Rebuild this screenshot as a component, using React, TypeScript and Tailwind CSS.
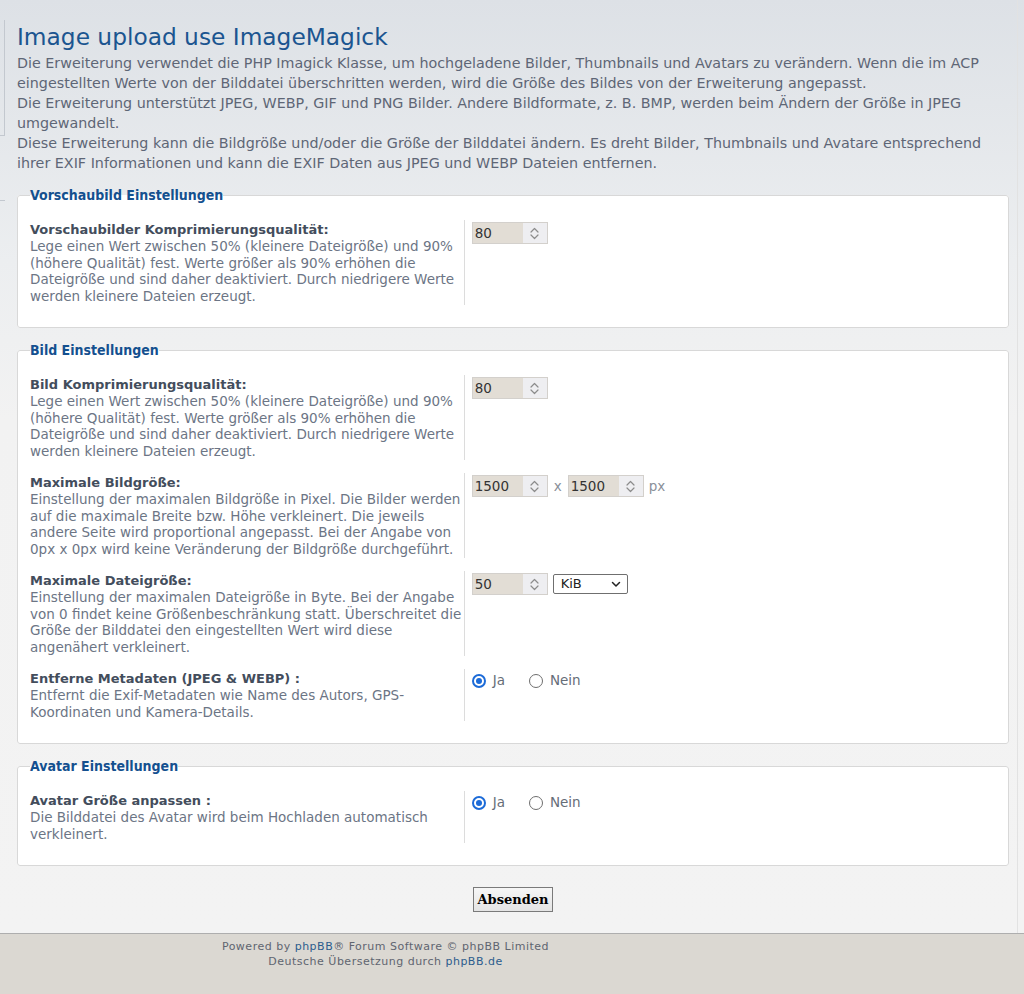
import React from "react";

const sans = "font-['DejaVu_Sans','Verdana',sans-serif]";

function Spinner() {
  return (
    <svg width="11" height="15" viewBox="0 0 11 15" fill="none" stroke="#8c8c8c" strokeWidth="1.2" strokeLinecap="round" strokeLinejoin="round">
      <path d="M2 6 L5.5 2.5 L9 6" />
      <path d="M2 9 L5.5 12.5 L9 9" />
    </svg>
  );
}

function NumberInput({ value }: { value: string }) {
  return (
    <div className="flex h-[22px] w-[76px] shrink-0 border border-[#d3d0cc]">
      <div className="flex-1 bg-[#e2ddd5] pl-[2px] text-[13.5px] leading-[20px] text-[#333333]">{value}</div>
      <div className="flex w-[24px] items-center justify-center bg-[#eeeef1]">
        <Spinner />
      </div>
    </div>
  );
}

function Radio({ checked, label }: { checked: boolean; label: string }) {
  return (
    <div className="flex items-center">
      {checked ? (
        <span className="flex h-[14px] w-[14px] items-center justify-center rounded-full border-2 border-[#1c6bd8] bg-white">
          <span className="h-[6px] w-[6px] rounded-full bg-[#1c6bd8]" />
        </span>
      ) : (
        <span className="h-[14px] w-[14px] rounded-full border border-[#6e6e6e] bg-white" />
      )}
      <span className="ml-[7px] text-[13.5px] leading-[17px] text-[#666d78]">{label}</span>
    </div>
  );
}

function Row({
  label,
  lines,
  children,
  last,
}: {
  label: string;
  lines: string[];
  children: React.ReactNode;
  last?: boolean;
}) {
  return (
    <div className={"flex " + (last ? "" : "mb-[13px]")}>
      <div className="w-[45%] shrink-0 border-r border-[#dcdcdc] py-[1px] pr-[5px]">
        <div className="whitespace-nowrap text-[13px] font-bold leading-[17px] text-[#434d5c]">{label}</div>
        {lines.map((l, i) => (
          <div key={i} className="whitespace-nowrap text-[13.5px] leading-[16.5px] text-[#6c7585]">
            {l}
          </div>
        ))}
      </div>
      <div className="ml-[7px] pt-[2px]">{children}</div>
    </div>
  );
}

function Fieldset({
  legend,
  children,
  pb,
}: {
  legend: string;
  children: React.ReactNode;
  pb: string;
}) {
  return (
    <fieldset className={"mt-[14px] rounded-[3px] border border-[#d8d8d8] bg-white px-[12px] " + pb}>
      <legend className="font-['DejaVu_Sans_Condensed','DejaVu_Sans',sans-serif] text-[14px] font-bold leading-[16px] text-[#14508f]">
        {legend}
      </legend>
      <div className="pt-[17px]">{children}</div>
    </fieldset>
  );
}

const qualityLines = [
  "Lege einen Wert zwischen 50% (kleinere Dateigröße) und 90%",
  "(höhere Qualität) fest. Werte größer als 90% erhöhen die",
  "Dateigröße und sind daher deaktiviert. Durch niedrigere Werte",
  "werden kleinere Dateien erzeugt.",
];

function YesNo() {
  return (
    <div className="flex items-center pt-[1px]">
      <Radio checked label="Ja" />
      <div className="ml-[24px]">
        <Radio checked={false} label="Nein" />
      </div>
    </div>
  );
}

export default function App() {
  return (
    <div className={"flex h-[994px] w-full flex-col " + sans}>
      <div className="flex flex-1 bg-[linear-gradient(to_bottom,#dde1e6_0px,#eceef0_260px,#f2f2f2_420px,#f3f3f3_100%)]">
        <div className="w-[5px] shrink-0">
          <div className="mt-[20px] h-[116px] border-r border-b border-[#c3c8cf]" />
          <div className="mt-[64px] border-b border-[#c3c8cf]" />
        </div>
        <div className="w-[1013px] shrink-0 border-r border-[#e2e2e2] pl-[12px] pr-[8px] pt-[23px]">
          <h1 className="text-[23.3px] font-normal leading-[28px] text-[#1b5590]">Image upload use ImageMagick</h1>
          <div className="mt-[2px] whitespace-nowrap text-[14.3px] leading-[20px] text-[#5e6676]">
            <div>
              Die Erweiterung verwendet die PHP Imagick Klasse, um hochgeladene Bilder, Thumbnails und Avatars zu verändern. Wenn die im ACP
            </div>
            <div>eingestellten Werte von der Bilddatei überschritten werden, wird die Größe des Bildes von der Erweiterung angepasst.</div>
            <div>
              Die Erweiterung unterstützt JPEG, WEBP, GIF und PNG Bilder. Andere Bildformate, z. B. BMP, werden beim Ändern der Größe in JPEG
            </div>
            <div>umgewandelt.</div>
            <div>
              Diese Erweiterung kann die Bildgröße und/oder die Größe der Bilddatei ändern. Es dreht Bilder, Thumbnails und Avatare entsprechend
            </div>
            <div>ihrer EXIF Informationen und kann die EXIF Daten aus JPEG und WEBP Dateien entfernen.</div>
          </div>

          <Fieldset legend="Vorschaubild Einstellungen" pb="pb-[22px]">
            <Row label="Vorschaubilder Komprimierungsqualität:" lines={qualityLines} last>
              <NumberInput value="80" />
            </Row>
          </Fieldset>

          <Fieldset legend="Bild Einstellungen" pb="pb-[22px]">
            <Row label="Bild Komprimierungsqualität:" lines={qualityLines}>
              <NumberInput value="80" />
            </Row>
            <Row
              label="Maximale Bildgröße:"
              lines={[
                "Einstellung der maximalen Bildgröße in Pixel. Die Bilder werden",
                "auf die maximale Breite bzw. Höhe verkleinert. Die jeweils",
                "andere Seite wird proportional angepasst. Bei der Angabe von",
                "0px x 0px wird keine Veränderung der Bildgröße durchgeführt.",
              ]}
            >
              <div className="flex items-center">
                <NumberInput value="1500" />
                <span className="mx-[6px] text-[13.5px] leading-[17px] text-[#8a909a]">x</span>
                <NumberInput value="1500" />
                <span className="ml-[5px] text-[13.5px] leading-[17px] text-[#8a909a]">px</span>
              </div>
            </Row>
            <Row
              label="Maximale Dateigröße:"
              lines={[
                "Einstellung der maximalen Dateigröße in Byte. Bei der Angabe",
                "von 0 findet keine Größenbeschränkung statt. Überschreitet die",
                "Größe der Bilddatei den eingestellten Wert wird diese",
                "angenähert verkleinert.",
              ]}
            >
              <div className="flex items-center">
                <NumberInput value="50" />
                <div className="ml-[5px] flex h-[20px] w-[75px] items-center justify-between rounded-[2px] border border-[#6f6f6f] bg-white pl-[7px] pr-[6px] text-[13px] text-[#222222]">
                  <span>KiB</span>
                  <svg width="10" height="7" viewBox="0 0 10 7" fill="none" stroke="#222" strokeWidth="1.5" strokeLinecap="round" strokeLinejoin="round">
                    <path d="M1.5 1.5 L5 5 L8.5 1.5" />
                  </svg>
                </div>
              </div>
            </Row>
            <Row
              label="Entferne Metadaten (JPEG & WEBP) :"
              lines={["Entfernt die Exif-Metadaten wie Name des Autors, GPS-", "Koordinaten und Kamera-Details."]}
              last
            >
              <YesNo />
            </Row>
          </Fieldset>

          <Fieldset legend="Avatar Einstellungen" pb="pb-[22px]">
            <Row
              label="Avatar Größe anpassen :"
              lines={["Die Bilddatei des Avatar wird beim Hochladen automatisch", "verkleinert."]}
              last
            >
              <YesNo />
            </Row>
          </Fieldset>

          <div className="mt-[21px] flex justify-center">
            <button className="h-[25px] border border-[#7a7a7a] bg-[linear-gradient(to_bottom,#f6f6f6,#e4e4e4)] px-[3px] font-['DejaVu_Serif',serif] text-[13px] font-bold text-black">
              Absenden
            </button>
          </div>
        </div>
      </div>
      <footer className="h-[61px] shrink-0 border-t border-[#aeaeae] bg-[#dbd8d2]">
        <div className="w-[771px] pt-[5px] text-center text-[11px] leading-[15px] tracking-[0.5px] text-[#5f6570]">
          <div>
            Powered by <span className="text-[#2b5c8d]">phpBB</span>® Forum Software © phpBB Limited
          </div>
          <div>
            Deutsche Übersetzung durch <span className="text-[#2b5c8d]">phpBB.de</span>
          </div>
        </div>
      </footer>
    </div>
  );
}
